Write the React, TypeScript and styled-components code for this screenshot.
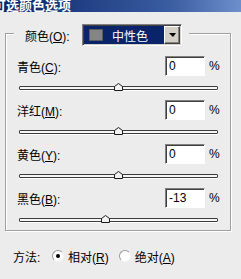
import React from 'react';
import styled, { createGlobalStyle } from 'styled-components';

interface ChannelData {
    name: string;
    accessKey: string;
    value: number;
}

const channels: ChannelData[] = [
    { name: '青色', accessKey: 'C', value: 0 },
    { name: '洋红', accessKey: 'M', value: 0 },
    { name: '黄色', accessKey: 'Y', value: 0 },
    { name: '黑色', accessKey: 'B', value: -13 },
];

export default function App() {
    return (
        <>
            <GlobalStyle />
            <Dialog>
                <TitleBar>
                    <TitleText>可选颜色选项</TitleText>
                </TitleBar>
                <Body>
                    <GroupBox>
                        <Legend>
                            <LegendLabel>
                                颜色(<u>O</u>):
                            </LegendLabel>
                            <Combo>
                                <ComboValue>
                                    <Swatch />
                                    中性色
                                </ComboValue>
                                <ArrowButton>
                                    <ArrowDown />
                                </ArrowButton>
                            </Combo>
                        </Legend>
                        <Channels>
                            {channels.map((c) => (
                                <Channel key={c.accessKey}>
                                    <LabelRow>
                                        <ChannelLabel>
                                            {c.name}(<u>{c.accessKey}</u>):
                                        </ChannelLabel>
                                        <ValueBox>{c.value}</ValueBox>
                                        <Percent>%</Percent>
                                    </LabelRow>
                                    <SliderArea>
                                        <Track>
                                            <Thumb
                                                style={{
                                                    left: `calc(${(c.value + 100) / 2}% - 4.5px)`,
                                                }}
                                            >
                                                <svg width="9" height="8" viewBox="0 0 9 8">
                                                    <polygon
                                                        points="0.5,7.5 0.5,3.5 4.5,0.5 8.5,3.5 8.5,7.5"
                                                        fill="#f2f2f2"
                                                        stroke="#1a1a1a"
                                                    />
                                                </svg>
                                            </Thumb>
                                        </Track>
                                    </SliderArea>
                                </Channel>
                            ))}
                        </Channels>
                    </GroupBox>
                    <MethodRow>
                        <MethodLabel>方法:</MethodLabel>
                        <RadioOption>
                            <Radio checked />
                            <OptionText>
                                相对(<u>R</u>)
                            </OptionText>
                        </RadioOption>
                        <RadioOption>
                            <Radio />
                            <OptionText>
                                绝对(<u>A</u>)
                            </OptionText>
                        </RadioOption>
                    </MethodRow>
                </Body>
            </Dialog>
        </>
    );
}

const GlobalStyle = createGlobalStyle`
    html, body {
        margin: 0;
        padding: 0;
        background: #ececec;
    }
    body {
        font-family: "Liberation Sans", "Noto Sans CJK SC", sans-serif;
        font-size: 12px;
        color: #000;
    }
    u {
        text-decoration: underline;
        text-underline-offset: 1px;
    }
`;

const Dialog = styled.div`
    width: 241px;
    height: 279px;
    overflow: hidden;
    background: #ececec;
`;

const TitleBar = styled.div`
    height: 12px;
    overflow: hidden;
    background: linear-gradient(to right, #0a246a 0%, #3a5ca0 70%, #6d8fcb 100%);
`;

const TitleText = styled.div`
    margin-left: -7px;
    margin-top: -3px;
    font-family: "Noto Sans CJK SC", sans-serif;
    font-size: 13px;
    font-weight: bold;
    line-height: 15px;
    color: #fff;
    white-space: nowrap;
`;

const Body = styled.div`
    padding: 21px 0 0 5px;
`;

const GroupBox = styled.div`
    box-sizing: border-box;
    width: 226px;
    border: 1px solid #a0a0a0;
    box-shadow: inset 1px 1px 0 #fff, 1px 1px 0 #fff;
`;

const Legend = styled.div`
    display: flex;
    align-items: center;
    width: fit-content;
    height: 22px;
    margin: -10px 0 0 8px;
    padding: 0 7px 0 11px;
    background: #ececec;
`;

const LegendLabel = styled.span`
    width: 57px;
    white-space: nowrap;
`;

const Combo = styled.div`
    box-sizing: border-box;
    display: flex;
    width: 100px;
    height: 22px;
    padding: 1px;
    border: 1px solid;
    border-color: #808080 #fff #fff #808080;
    box-shadow: inset 1px 1px 0 #404040, inset -1px -1px 0 #d4d0c8;
    background: #fff;
`;

const ComboValue = styled.div`
    flex: 1;
    display: flex;
    align-items: center;
    padding-left: 5px;
    background: #0a246a;
    color: #fff;
    font-family: "Noto Sans CJK SC", sans-serif;
`;

const Swatch = styled.span`
    box-sizing: border-box;
    width: 14px;
    height: 12px;
    margin-right: 9px;
    background: #858585;
    border: 1px solid #5c5c5c;
`;

const ArrowButton = styled.div`
    box-sizing: border-box;
    width: 16px;
    display: flex;
    align-items: center;
    justify-content: center;
    background: #d4d0c8;
    border: 1px solid;
    border-color: #fff #404040 #404040 #fff;
    box-shadow: inset -1px -1px 0 #808080;
`;

const ArrowDown = styled.span`
    width: 0;
    height: 0;
    border-left: 4px solid transparent;
    border-right: 3px solid transparent;
    border-top: 4px solid #000;
`;

const Channels = styled.div`
    display: flex;
    flex-direction: column;
    gap: 2px;
    margin-top: 10px;
`;

const Channel = styled.div`
    display: flex;
    flex-direction: column;
`;

const LabelRow = styled.div`
    display: flex;
    align-items: center;
    height: 20px;
    padding: 0 10px 0 11px;
`;

const ChannelLabel = styled.span`
    flex: 1;
    white-space: nowrap;
`;

const ValueBox = styled.div`
    box-sizing: border-box;
    display: flex;
    align-items: center;
    width: 40px;
    height: 20px;
    padding-left: 3px;
    border: 1px solid;
    border-color: #808080 #fff #fff #808080;
    box-shadow: inset 1px 1px 0 #404040;
    background: #fff;
`;

const Percent = styled.span`
    width: 11px;
    margin-left: 4px;
`;

const SliderArea = styled.div`
    box-sizing: border-box;
    height: 22px;
    padding: 10px 12px 0 13px;
`;

const Track = styled.div`
    position: relative;
    box-sizing: border-box;
    height: 4px;
    border: 1px solid #3c3c3c;
    border-radius: 1px;
    background: #f6f6f6;
    box-shadow: 0 1px 0 #fff;
`;

const Thumb = styled.div`
    position: absolute;
    top: -4px;
    width: 9px;
    height: 8px;
    line-height: 0;
`;

const MethodRow = styled.div`
    display: flex;
    align-items: center;
    height: 16px;
    margin-top: 17px;
    padding-left: 8px;
`;

const MethodLabel = styled.span`
    width: 39px;
`;

const RadioOption = styled.span`
    display: flex;
    align-items: center;
    gap: 4px;
    margin-right: 10px;
`;

const OptionText = styled.span`
    white-space: nowrap;
`;

const Radio = styled.span<{ checked?: boolean }>`
    box-sizing: border-box;
    display: flex;
    align-items: center;
    justify-content: center;
    width: 12px;
    height: 12px;
    border-radius: 50%;
    border: 1px solid;
    border-color: #9a9a9a #f4f4f4 #f4f4f4 #9a9a9a;
    background: #fff;

    &::after {
        content: '';
        width: 4px;
        height: 4px;
        border-radius: 50%;
        background: ${({ checked }) => (checked ? '#000' : 'transparent')};
    }
`;
